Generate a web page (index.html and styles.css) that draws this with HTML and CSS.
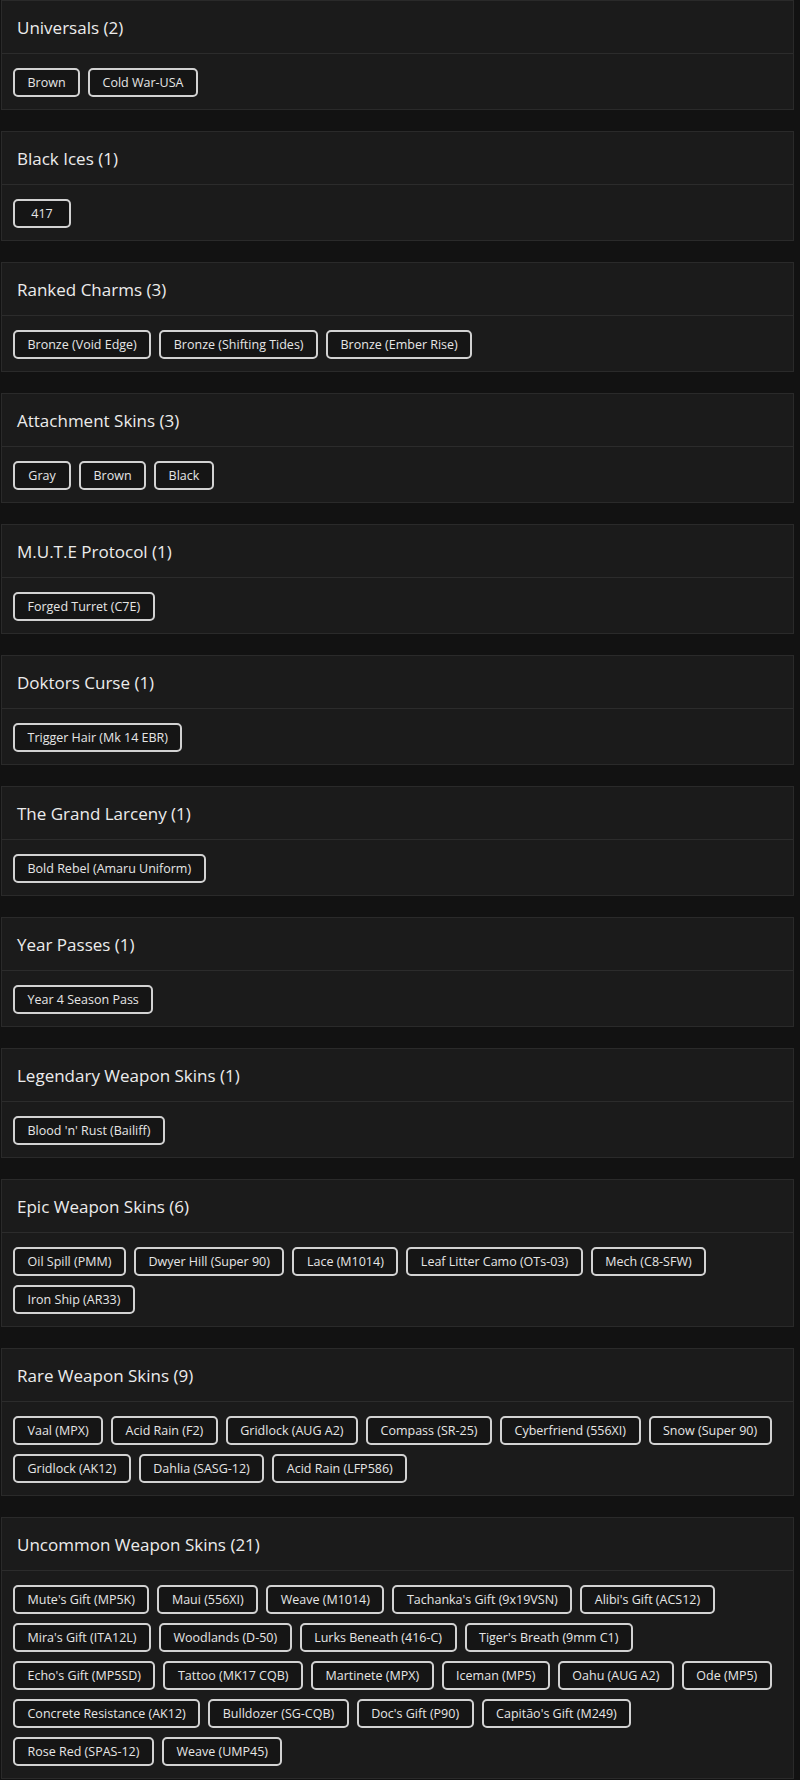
FILE: index.html
```html
<!DOCTYPE html>
<html lang="en">
<head>
<meta charset="utf-8">
<title>Inventory</title>
<link rel="stylesheet" href="styles.css">
</head>
<body>
<div class="list">
  <section class="card">
    <h2 class="card-title">Universals (2)</h2>
    <div class="tags"><span class="tag">Brown</span><span class="tag">Cold War-USA</span></div>
  </section>
  <section class="card">
    <h2 class="card-title">Black Ices (1)</h2>
    <div class="tags"><span class="tag">417</span></div>
  </section>
  <section class="card">
    <h2 class="card-title">Ranked Charms (3)</h2>
    <div class="tags"><span class="tag">Bronze (Void Edge)</span><span class="tag">Bronze (Shifting Tides)</span><span class="tag">Bronze (Ember Rise)</span></div>
  </section>
  <section class="card">
    <h2 class="card-title">Attachment Skins (3)</h2>
    <div class="tags"><span class="tag">Gray</span><span class="tag">Brown</span><span class="tag">Black</span></div>
  </section>
  <section class="card">
    <h2 class="card-title">M.U.T.E Protocol (1)</h2>
    <div class="tags"><span class="tag">Forged Turret (C7E)</span></div>
  </section>
  <section class="card">
    <h2 class="card-title">Doktors Curse (1)</h2>
    <div class="tags"><span class="tag">Trigger Hair (Mk 14 EBR)</span></div>
  </section>
  <section class="card">
    <h2 class="card-title">The Grand Larceny (1)</h2>
    <div class="tags"><span class="tag">Bold Rebel (Amaru Uniform)</span></div>
  </section>
  <section class="card">
    <h2 class="card-title">Year Passes (1)</h2>
    <div class="tags"><span class="tag">Year 4 Season Pass</span></div>
  </section>
  <section class="card">
    <h2 class="card-title">Legendary Weapon Skins (1)</h2>
    <div class="tags"><span class="tag">Blood 'n' Rust (Bailiff)</span></div>
  </section>
  <section class="card">
    <h2 class="card-title">Epic Weapon Skins (6)</h2>
    <div class="tags"><span class="tag">Oil Spill (PMM)</span><span class="tag">Dwyer Hill (Super 90)</span><span class="tag">Lace (M1014)</span><span class="tag">Leaf Litter Camo (OTs-03)</span><span class="tag">Mech (C8-SFW)</span><span class="tag">Iron Ship (AR33)</span></div>
  </section>
  <section class="card">
    <h2 class="card-title">Rare Weapon Skins (9)</h2>
    <div class="tags"><span class="tag">Vaal (MPX)</span><span class="tag">Acid Rain (F2)</span><span class="tag">Gridlock (AUG A2)</span><span class="tag">Compass (SR-25)</span><span class="tag">Cyberfriend (556XI)</span><span class="tag">Snow (Super 90)</span><span class="tag">Gridlock (AK12)</span><span class="tag">Dahlia (SASG-12)</span><span class="tag">Acid Rain (LFP586)</span></div>
  </section>
  <section class="card">
    <h2 class="card-title">Uncommon Weapon Skins (21)</h2>
    <div class="tags"><span class="tag">Mute's Gift (MP5K)</span><span class="tag">Maui (556XI)</span><span class="tag">Weave (M1014)</span><span class="tag">Tachanka's Gift (9x19VSN)</span><span class="tag">Alibi's Gift (ACS12)</span><span class="tag">Mira's Gift (ITA12L)</span><span class="tag">Woodlands (D-50)</span><span class="tag">Lurks Beneath (416-C)</span><span class="tag">Tiger's Breath (9mm C1)</span><span class="tag">Echo's Gift (MP5SD)</span><span class="tag">Tattoo (MK17 CQB)</span><span class="tag">Martinete (MPX)</span><span class="tag">Iceman (MP5)</span><span class="tag">Oahu (AUG A2)</span><span class="tag">Ode (MP5)</span><span class="tag">Concrete Resistance (AK12)</span><span class="tag">Bulldozer (SG-CQB)</span><span class="tag">Doc's Gift (P90)</span><span class="tag">Capitão's Gift (M249)</span><span class="tag">Rose Red (SPAS-12)</span><span class="tag">Weave (UMP45)</span></div>
  </section>
</div>
</body>
</html>
```

FILE: styles.css
```css
html, body {
  margin: 0;
  padding: 0;
  background: #121212;
}

body {
  font-family: "Open Sans", "Liberation Sans", sans-serif;
  color: #e6e6e6;
}

.list {
  display: flex;
  flex-direction: column;
  gap: 21px;
  padding: 0 6px 0 1px;
}

.card {
  background: #1b1b1b;
  border: 1px solid #2a2a2a;
}

.card-title {
  margin: 0;
  height: 52px;
  display: flex;
  align-items: center;
  padding: 0 15px;
  font-size: 17px;
  font-weight: 500;
  color: #ececec;
  border-bottom: 1px solid #2c2c2c;
}

.tags {
  display: flex;
  flex-wrap: wrap;
  gap: 9px 8px;
  padding: 14px 17px 12px 11px;
}

.tag {
  display: inline-flex;
  align-items: center;
  justify-content: center;
  min-width: 58px;
  height: 29px;
  box-sizing: border-box;
  padding: 0 12.5px;
  border: 2px solid #d2d2d2;
  border-radius: 5px;
  background: #151515;
  font-size: 12.5px;
  color: #e6e6e6;
  white-space: nowrap;
}
```
